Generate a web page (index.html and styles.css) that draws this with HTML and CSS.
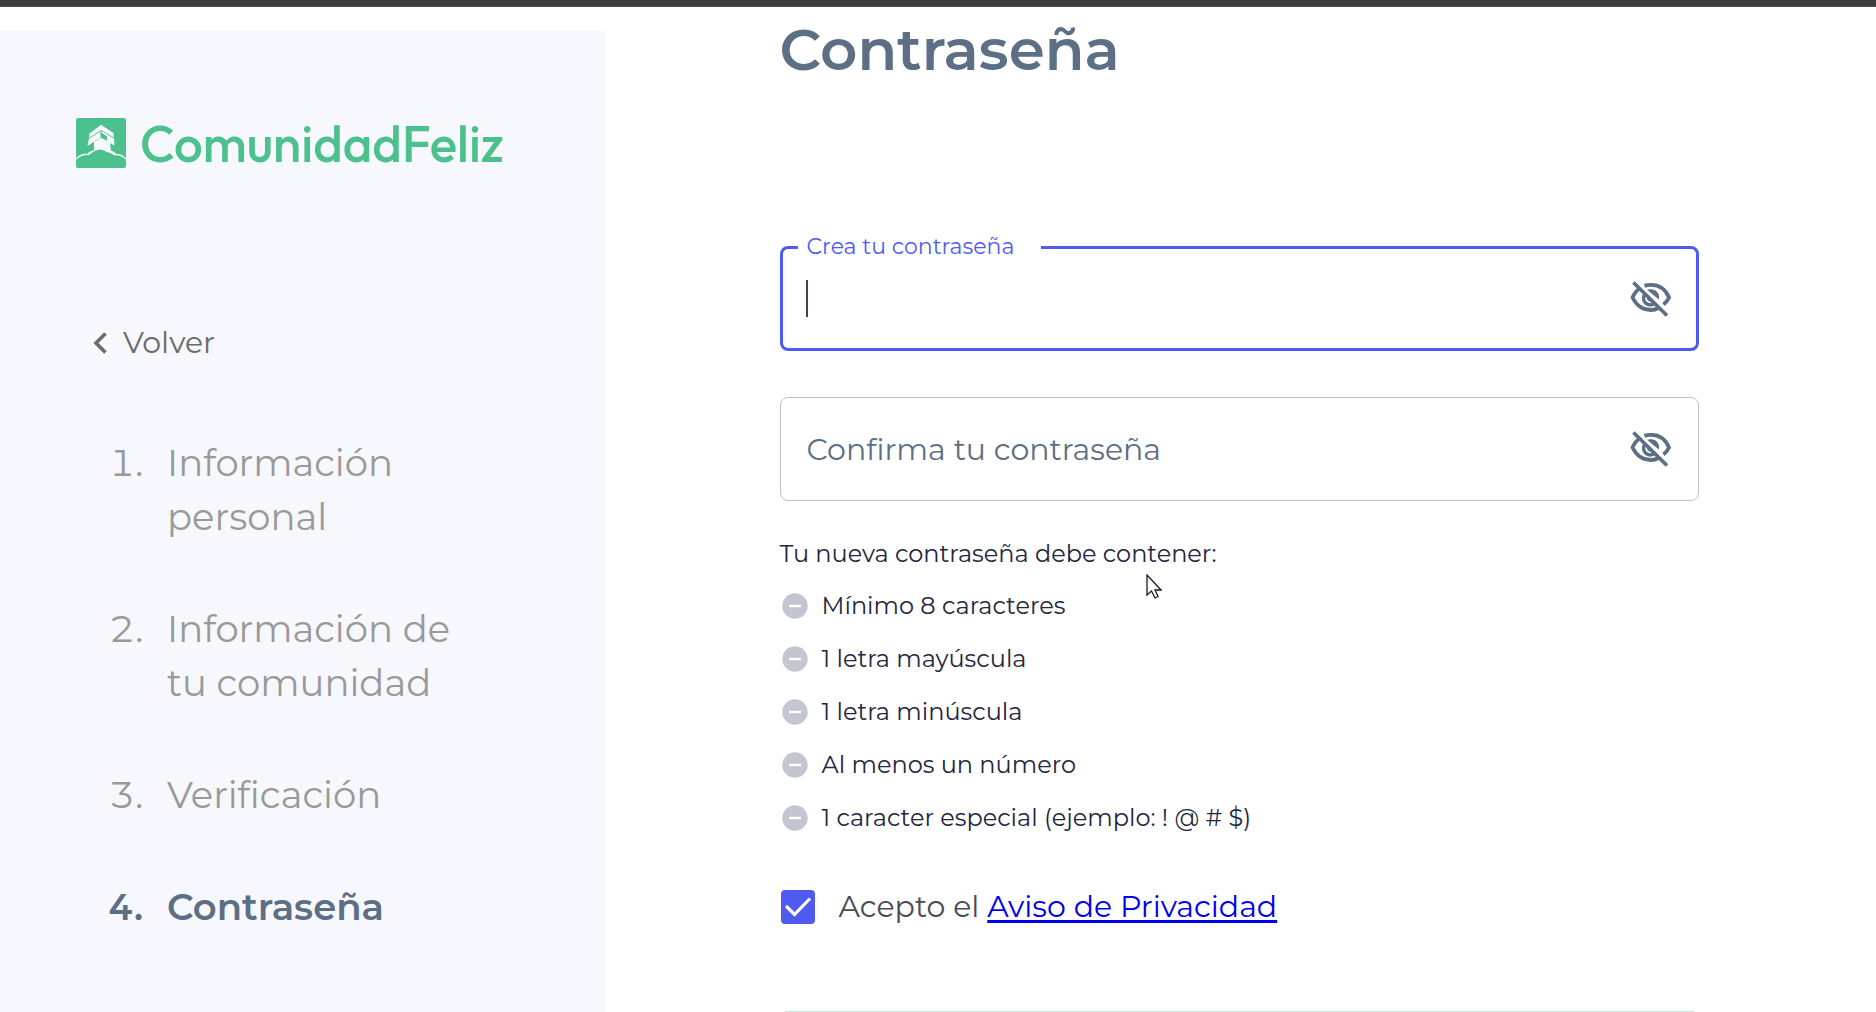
FILE: index.html
```html
<!DOCTYPE html>
<html lang="es">
<head>
<meta charset="utf-8">
<meta name="viewport" content="width=device-width, initial-scale=1">
<title>ComunidadFeliz - Contraseña</title>
<link rel="stylesheet" href="styles.css">
</head>
<body>
<svg class="sprite" aria-hidden="true">
  <symbol id="eye-off" viewBox="0 0 42 36">
    <path d="M14.500 4.900Q17.500 3.800 21 3.800C29 3.800 35.500 8 39 16.500Q37.300 20.500 33.500 23.500M28.500 27Q25 29 21 29C13 29 6.500 24.500 2.500 16.500Q5.500 10 10 7" fill="none" stroke="currentColor" stroke-width="3.800"/>
    <path d="M17 8.800Q19 8 21 8.300A8 8 0 0 1 28.800 18.500Z" fill="currentColor"/>
    <path d="M15.500 12.500A6.600 6.600 0 0 0 25 22M19 15.500Q17.800 19.500 22.500 19.200" fill="none" stroke="currentColor" stroke-width="3.400"/>
    <path d="M3.500 1.500L37 34.500" stroke="currentColor" stroke-width="3.800"/>
    <path d="M6.500 0.500L39.500 33" stroke="#fff" stroke-width="1.300"/>
  </symbol>
  <symbol id="minus" viewBox="0 0 26 26">
    <circle cx="13" cy="13" r="12.700" fill="#c3c6d1"/>
    <path d="M7 13H19" stroke="#fff" stroke-width="2.400"/>
  </symbol>
</svg>
<div class="topbar"></div>
<div class="layout">
  <aside class="sidebar">
    <a class="brand" href="#">
      <svg class="brand-mark" viewBox="0 0 50 50" aria-hidden="true">
        <rect width="50" height="50" rx="2" fill="#4dc18d"/>
        <g fill="#f7f8fd">
          <path d="M13.500 15.500L25 6.700L37.500 15L38 19.500L25 12L13 20Z"/>
          <path d="M12.800 21L24.500 13.200V19.500L18.500 23.500L11.500 28Z"/>
          <path d="M25.500 13L38 20.500L38.500 27.500L31 23.500V20.500L25.500 17Z"/>
          <path d="M25 19.500L34 24.500L35 32.500Q39 34 40.500 36Q46 35.500 50 40.500V42Q44.500 36.500 38.500 37.500Q35 34.500 31 34Q25 29.500 18.500 33Q15 35.500 12.500 37Q5 36.500 0 42V40.500Q5 35 11 36Q13 33.500 18 32V24Z"/>
        </g>
        <path d="M25 14.500L31 18.500V22.500L25 19.500Z" fill="#4dc18d"/>
      </svg>
      <span>ComunidadFeliz</span>
    </a>
    <a class="back" href="#">
      <svg viewBox="0 0 14 22" aria-hidden="true"><path d="M12.500 1.500L3 11L12.500 20.500" fill="none" stroke="currentColor" stroke-width="3.600"/></svg>
      <span>Volver</span>
    </a>
    <ol class="steps">
      <li><span class="num">1.</span><span>Información personal</span></li>
      <li><span class="num">2.</span><span>Información de tu comunidad</span></li>
      <li><span class="num">3.</span><span>Verificación</span></li>
      <li class="current" aria-current="step"><span class="num">4.</span><span>Contraseña</span></li>
    </ol>
  </aside>
  <main class="content">
    <form class="form">
      <h1>Contraseña</h1>
      <div class="fields">
        <div class="field focused">
          <label for="password">Crea tu contraseña</label>
          <input id="password" type="password">
          <span class="caret"></span>
          <button type="button" aria-label="Mostrar contraseña"><svg><use href="#eye-off"/></svg></button>
        </div>
        <div class="field">
          <input id="confirm" type="password" placeholder="Confirma tu contraseña" aria-label="Confirma tu contraseña">
          <button type="button" aria-label="Mostrar contraseña"><svg><use href="#eye-off"/></svg></button>
        </div>
      </div>
      <div class="rules">
        <p>Tu nueva contraseña debe contener:</p>
        <ul>
          <li><svg><use href="#minus"/></svg>Mínimo 8 caracteres</li>
          <li><svg><use href="#minus"/></svg>1 letra mayúscula</li>
          <li><svg><use href="#minus"/></svg>1 letra minúscula</li>
          <li><svg><use href="#minus"/></svg>Al menos un número</li>
          <li><svg><use href="#minus"/></svg>1 caracter especial (ejemplo: ! @ # $)</li>
        </ul>
        <svg class="pointer" viewBox="0 0 16 25" aria-hidden="true"><path d="M1 1V21L5.500 17L9 24L12 22.500L9 16H15Z" fill="#fff" stroke="#1b1b2b" stroke-width="1.300"/></svg>
      </div>
      <div class="consent">
        <span class="tick">
          <input id="privacy" type="checkbox" checked>
          <svg viewBox="0 0 34 34" aria-hidden="true"><path d="M5 16L13.500 24.500L29 8.500" fill="none" stroke="#fff" stroke-width="3.200"/></svg>
        </span>
        <label for="privacy">Acepto el <a href="#">Aviso de Privacidad</a></label>
      </div>
      <div class="actions"></div>
    </form>
  </main>
</div>
</body>
</html>
```
FILE: styles.css
```css
* { box-sizing: border-box; }

body {
  margin: 0;
  min-height: 100vh;
  display: flex;
  flex-direction: column;
  background: #fff;
  font-family: Montserrat, Inter, "Open Sans", sans-serif;
  font-weight: 400;
}

.sprite { display: none; }

.topbar {
  flex: none;
  height: 7px;
  background: #3b3b3b;
  border-bottom: 2px solid #444;
}

.layout {
  flex: 1;
  display: grid;
  grid-template-columns: 606px 1fr;
}

.sidebar {
  margin-top: 24px;
  padding: 84px 76px 0;
  background: #f7f8fd;
}

.brand {
  display: flex;
  align-items: center;
  gap: 14px;
  height: 56px;
  color: #4dc18d;
  font-family: Outfit, Lato, sans-serif;
  font-size: 51px;
  font-weight: 500;
  line-height: 56px;
  text-decoration: none;
}

.brand-mark { width: 50px; height: 50px; flex: none; }

.back {
  display: flex;
  align-items: center;
  gap: 16px;
  margin: 152px 0 0 17px;
  color: #6b6b6b;
  font-size: 30px;
  line-height: 40px;
  text-decoration: none;
}

.back svg { width: 14px; height: 22px; }

.steps {
  display: flex;
  flex-direction: column;
  gap: 58px;
  margin: 73px 50px 0 34px;
  padding: 0;
  list-style: none;
  color: #999;
  font-size: 37px;
  line-height: 54px;
}

.steps li { display: flex; gap: 24px; }

.steps .num {
  flex: none;
  width: 33px;
  display: flex;
  justify-content: flex-end;
  font-variant-numeric: tabular-nums;
}

.steps .current { color: #5c6f84; font-weight: 600; }

.content { padding: 0 84px 0 80px; }

.form { max-width: 919px; margin: 0 auto; }

h1 {
  margin: 3px 0 156px;
  color: #5c6f84;
  font-size: 58px;
  font-weight: 600;
  line-height: 80px;
}

.fields { display: grid; gap: 46px; }

.field {
  position: relative;
  display: flex;
  align-items: center;
  height: 104px;
  padding: 0 26px;
  border: 1px solid #c3c3c3;
  border-radius: 8px;
}

.field.focused { height: 105px; padding: 0 24px; border: 3px solid #4f5bf0; }

.field label {
  position: absolute;
  top: -16px;
  left: 15px;
  padding: 0 27px 0 9px;
  background: #fff;
  color: #4f5bf0;
  font-size: 22px;
  line-height: 28px;
}

.field input {
  flex: 1;
  min-width: 0;
  height: 60px;
  padding: 0;
  border: 0;
  outline: 0;
  background: none;
  color: #333;
  font: inherit;
  font-size: 30px;
}

.field input::placeholder { color: #5c6f84; opacity: 1; }

.field button {
  padding: 0;
  border: 0;
  background: none;
  color: #5c6f84;
}

.field button svg { display: block; width: 42px; height: 36px; }

.caret {
  position: absolute;
  left: 23px;
  top: 31px;
  width: 2px;
  height: 37px;
  background: #44444f;
}

.rules {
  position: relative;
  margin-top: 35px;
  color: #23263f;
  font-size: 24px;
  line-height: 36px;
}

.rules p { margin: 0 0 16px; }

.rules ul {
  display: grid;
  gap: 17px;
  margin: 0;
  padding: 0;
  list-style: none;
}

.rules li { display: flex; align-items: center; gap: 14px; }
.rules li svg { width: 26px; height: 26px; margin-left: 2px; }

.pointer {
  position: absolute;
  left: 366px;
  top: 38px;
  width: 16px;
  height: 25px;
}

.consent {
  display: flex;
  align-items: center;
  gap: 24px;
  margin-top: 51px;
  color: #4b4b55;
  font-size: 30px;
  line-height: 40px;
}

.tick { position: relative; width: 34px; height: 34px; margin-left: 1px; }

.tick input {
  appearance: none;
  display: block;
  width: 34px;
  height: 34px;
  margin: 0;
  border-radius: 4px;
}

.tick input:checked { background: #4f5bf0; }
.tick svg { position: absolute; inset: 0; pointer-events: none; }

.consent a { color: #00e; text-underline-offset: 3px; text-decoration-thickness: 3px; text-decoration-skip-ink: none; }

.actions {
  margin: 84px 5px 0;
  border-top: 1px solid #b9f3dc;
}
```
